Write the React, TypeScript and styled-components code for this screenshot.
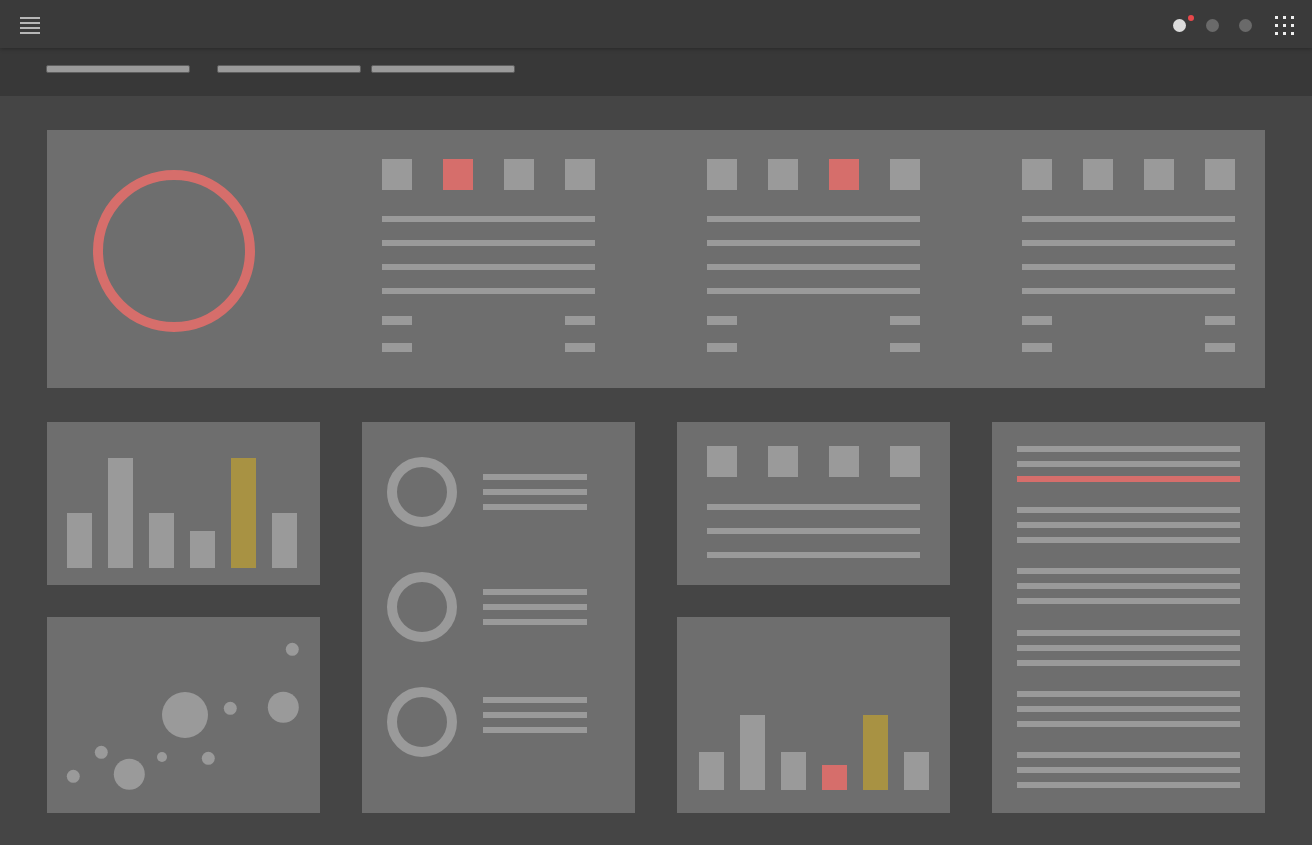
import React from "react";
import styled, { createGlobalStyle } from "styled-components";

const GRAY = "#9a9a9a";
const RED = "#d66e6b";
const GOLD = "#a89243";
const CARD = "#6e6e6e";

type Tone = "gray" | "red" | "gold";
const toneColor = (tone: Tone = "gray") => (tone === "red" ? RED : tone === "gold" ? GOLD : GRAY);

const GlobalStyle = createGlobalStyle`
    html, body {
        margin: 0;
        padding: 0;
        background: #454545;
        font-family: "Liberation Sans", Arial, sans-serif;
    }
    * { box-sizing: border-box; }
`;

const Page = styled.div`
    width: 1312px;
    min-height: 845px;
    background: #454545;
    display: flex;
    flex-direction: column;
`;

/* ---------- top bar ---------- */

const TopBar = styled.header`
    position: relative;
    z-index: 2;
    height: 48px;
    background: #3a3a3a;
    box-shadow: 0 1px 4px rgba(0, 0, 0, 0.28);
    display: flex;
    align-items: center;
    justify-content: space-between;
    padding: 2px 18px 0 20px;
`;

const Actions = styled.div`
    display: flex;
    align-items: center;
    gap: 20px;
`;

const Avatar = styled.span<{ $active?: boolean }>`
    position: relative;
    width: 13px;
    height: 13px;
    border-radius: 50%;
    background: ${(p) => (p.$active ? "#dcdcdc" : "#6a6a6a")};
`;

const Badge = styled.span`
    position: absolute;
    left: 15px;
    top: -4px;
    width: 6px;
    height: 6px;
    border-radius: 50%;
    background: #e8484b;
`;

const AppsGrid = styled.div`
    margin-left: 3px;
    display: grid;
    grid-template-columns: repeat(3, 3px);
    grid-auto-rows: 3px;
    gap: 5px;
    & > span {
        background: #f0f0f0;
    }
`;

const MenuIcon = () => (
    <svg width="20" height="17" viewBox="0 0 20 17">
        {[1, 6, 11, 16].map((y) => (
            <line key={y} x1="0" x2="20" y1={y} y2={y} stroke="#ececec" strokeWidth="1.4" />
        ))}
    </svg>
);

/* ---------- sub bar ---------- */

const SubBar = styled.nav`
    height: 48px;
    background: #383838;
    display: flex;
    align-items: flex-start;
    padding: 17px 0 0 46px;
`;

const Tab = styled.span<{ $gap?: number }>`
    width: 144px;
    height: 8px;
    margin-left: ${(p) => p.$gap ?? 0}px;
    border: 1px solid #5e5e5e;
    border-radius: 2px;
    background: ${GRAY};
`;

/* ---------- content ---------- */

const Main = styled.main`
    padding: 34px 47px 32px;
    display: flex;
    flex-direction: column;
    gap: 34px;
`;

const Card = styled.section<{ $h?: number }>`
    background: ${CARD};
    height: ${(p) => (p.$h ? `${p.$h}px` : "100%")};
    position: relative;
`;

const Hero = styled(Card)`
    display: flex;
    align-items: flex-start;
`;

const RingBox = styled.div`
    width: 335px;
    padding: 40px 0 0 46px;
`;

const Group = styled.div<{ $offset?: number }>`
    width: 213px;
    margin-left: ${(p) => p.$offset ?? 0}px;
    padding-top: 29px;
    display: flex;
    flex-direction: column;
`;

const Squares = styled.div`
    display: flex;
    justify-content: space-between;
`;

const Square = styled.span<{ $tone?: Tone }>`
    width: 30px;
    height: 31px;
    background: ${(p) => toneColor(p.$tone)};
`;

const LineStack = styled.div<{ $gap: number; $top?: number }>`
    display: flex;
    flex-direction: column;
    gap: ${(p) => p.$gap}px;
    margin-top: ${(p) => p.$top ?? 0}px;
`;

const Line = styled.span<{ $tone?: Tone; $w?: number }>`
    display: block;
    height: 6px;
    width: ${(p) => (p.$w ? `${p.$w}px` : "100%")};
    background: ${(p) => toneColor(p.$tone)};
`;

const PairRow = styled.div`
    display: flex;
    justify-content: space-between;
`;

const Chip = styled.span`
    width: 30px;
    height: 9px;
    background: ${GRAY};
`;

const Grid = styled.div`
    display: grid;
    grid-template-columns: repeat(4, 273px);
    column-gap: 42px;
    height: 391px;
`;

const Column = styled.div`
    display: flex;
    flex-direction: column;
    gap: 32px;
`;

const Bars = styled.div<{ $pl: number; $pb: number }>`
    height: 100%;
    display: flex;
    align-items: flex-end;
    gap: 16px;
    padding: 0 0 ${(p) => p.$pb}px ${(p) => p.$pl}px;
`;

const Bar = styled.span<{ $h: number; $tone?: Tone }>`
    width: 25px;
    height: ${(p) => p.$h}px;
    background: ${(p) => toneColor(p.$tone)};
`;

const DonutList = styled.div`
    padding: 35px 0 0 25px;
    display: flex;
    flex-direction: column;
    gap: 45px;
`;

const DonutRow = styled.div`
    display: flex;
    align-items: center;
    gap: 26px;
`;

const Padded = styled.div<{ $top: number; $left: number; $w: number }>`
    width: ${(p) => p.$w}px;
    padding: ${(p) => p.$top}px 0 0 ${(p) => p.$left}px;
`;

const ListCard = styled.div`
    padding: 24px 25px 0;
    display: flex;
    flex-direction: column;
    gap: 25.2px;
`;

/* ---------- data ---------- */

const heroGroups: { offset: number; red: number }[] = [
    { offset: 0, red: 1 },
    { offset: 112, red: 2 },
    { offset: 102, red: -1 },
];

const barsA: { h: number; tone?: Tone }[] = [
    { h: 55 },
    { h: 110 },
    { h: 55 },
    { h: 37 },
    { h: 110, tone: "gold" },
    { h: 55 },
];

const barsB: { h: number; tone?: Tone }[] = [
    { h: 38 },
    { h: 75 },
    { h: 38 },
    { h: 25, tone: "red" },
    { h: 75, tone: "gold" },
    { h: 38 },
];

const bubbles: [number, number, number][] = [
    [245.3, 32.3, 6.5],
    [138, 98, 23],
    [183.3, 91.3, 6.5],
    [236.3, 90.3, 15.5],
    [54.3, 135.3, 6.5],
    [82.3, 157.3, 15.5],
    [115, 140, 5],
    [161.3, 141.3, 6.5],
    [26.3, 159.3, 6.5],
];

// last legend block sits a little above its donut's centre
const donutLift = [0, 0, -14];

const Ring = ({ size, stroke, color }: { size: number; stroke: number; color: string }) => (
    <svg width={size} height={size} viewBox={`0 0 ${size} ${size}`}>
        <circle cx={size / 2} cy={size / 2} r={(size - stroke) / 2} fill="none" stroke={color} strokeWidth={stroke} />
    </svg>
);

export default function App() {
    return (
        <Page>
            <GlobalStyle />
            <TopBar>
                <MenuIcon />
                <Actions>
                    <Avatar $active>
                        <Badge />
                    </Avatar>
                    <Avatar />
                    <Avatar />
                    <AppsGrid>
                        {Array.from({ length: 9 }).map((_, i) => (
                            <span key={i} />
                        ))}
                    </AppsGrid>
                </Actions>
            </TopBar>

            <SubBar>
                <Tab />
                <Tab $gap={27} />
                <Tab $gap={10} />
            </SubBar>

            <Main>
                <Hero $h={258}>
                    <RingBox>
                        <Ring size={162} stroke={10} color={RED} />
                    </RingBox>
                    {heroGroups.map((g, gi) => (
                        <Group key={gi} $offset={g.offset}>
                            <Squares>
                                {[0, 1, 2, 3].map((i) => (
                                    <Square key={i} $tone={i === g.red ? "red" : "gray"} />
                                ))}
                            </Squares>
                            <LineStack $gap={18} $top={26}>
                                {[0, 1, 2, 3].map((i) => (
                                    <Line key={i} />
                                ))}
                            </LineStack>
                            <LineStack $gap={18} $top={22}>
                                <PairRow>
                                    <Chip />
                                    <Chip />
                                </PairRow>
                                <PairRow>
                                    <Chip />
                                    <Chip />
                                </PairRow>
                            </LineStack>
                        </Group>
                    ))}
                </Hero>

                <Grid>
                    <Column>
                        <Card $h={163}>
                            <Bars $pl={20} $pb={17}>
                                {barsA.map((b, i) => (
                                    <Bar key={i} $h={b.h} $tone={b.tone} />
                                ))}
                            </Bars>
                        </Card>
                        <Card $h={196}>
                            <svg width="273" height="196" viewBox="0 0 273 196">
                                {bubbles.map(([cx, cy, r], i) => (
                                    <circle key={i} cx={cx} cy={cy} r={r} fill={GRAY} />
                                ))}
                            </svg>
                        </Card>
                    </Column>

                    <Card>
                        <DonutList>
                            {donutLift.map((lift, i) => (
                                <DonutRow key={i}>
                                    <Ring size={70} stroke={10} color={GRAY} />
                                    <LineStack $gap={9} $top={lift}>
                                        <Line $w={104} />
                                        <Line $w={104} />
                                        <Line $w={104} />
                                    </LineStack>
                                </DonutRow>
                            ))}
                        </DonutList>
                    </Card>

                    <Column>
                        <Card $h={163}>
                            <Padded $top={24} $left={30} $w={243}>
                                <Squares>
                                    {[0, 1, 2, 3].map((i) => (
                                        <Square key={i} />
                                    ))}
                                </Squares>
                                <LineStack $gap={18} $top={27}>
                                    <Line />
                                    <Line />
                                    <Line />
                                </LineStack>
                            </Padded>
                        </Card>
                        <Card $h={196}>
                            <Bars $pl={22} $pb={23}>
                                {barsB.map((b, i) => (
                                    <Bar key={i} $h={b.h} $tone={b.tone} />
                                ))}
                            </Bars>
                        </Card>
                    </Column>

                    <Card>
                        <ListCard>
                            {[0, 1, 2, 3, 4, 5].map((gi) => (
                                <LineStack key={gi} $gap={9}>
                                    <Line />
                                    <Line />
                                    <Line $tone={gi === 0 ? "red" : "gray"} />
                                </LineStack>
                            ))}
                        </ListCard>
                    </Card>
                </Grid>
            </Main>
        </Page>
    );
}
